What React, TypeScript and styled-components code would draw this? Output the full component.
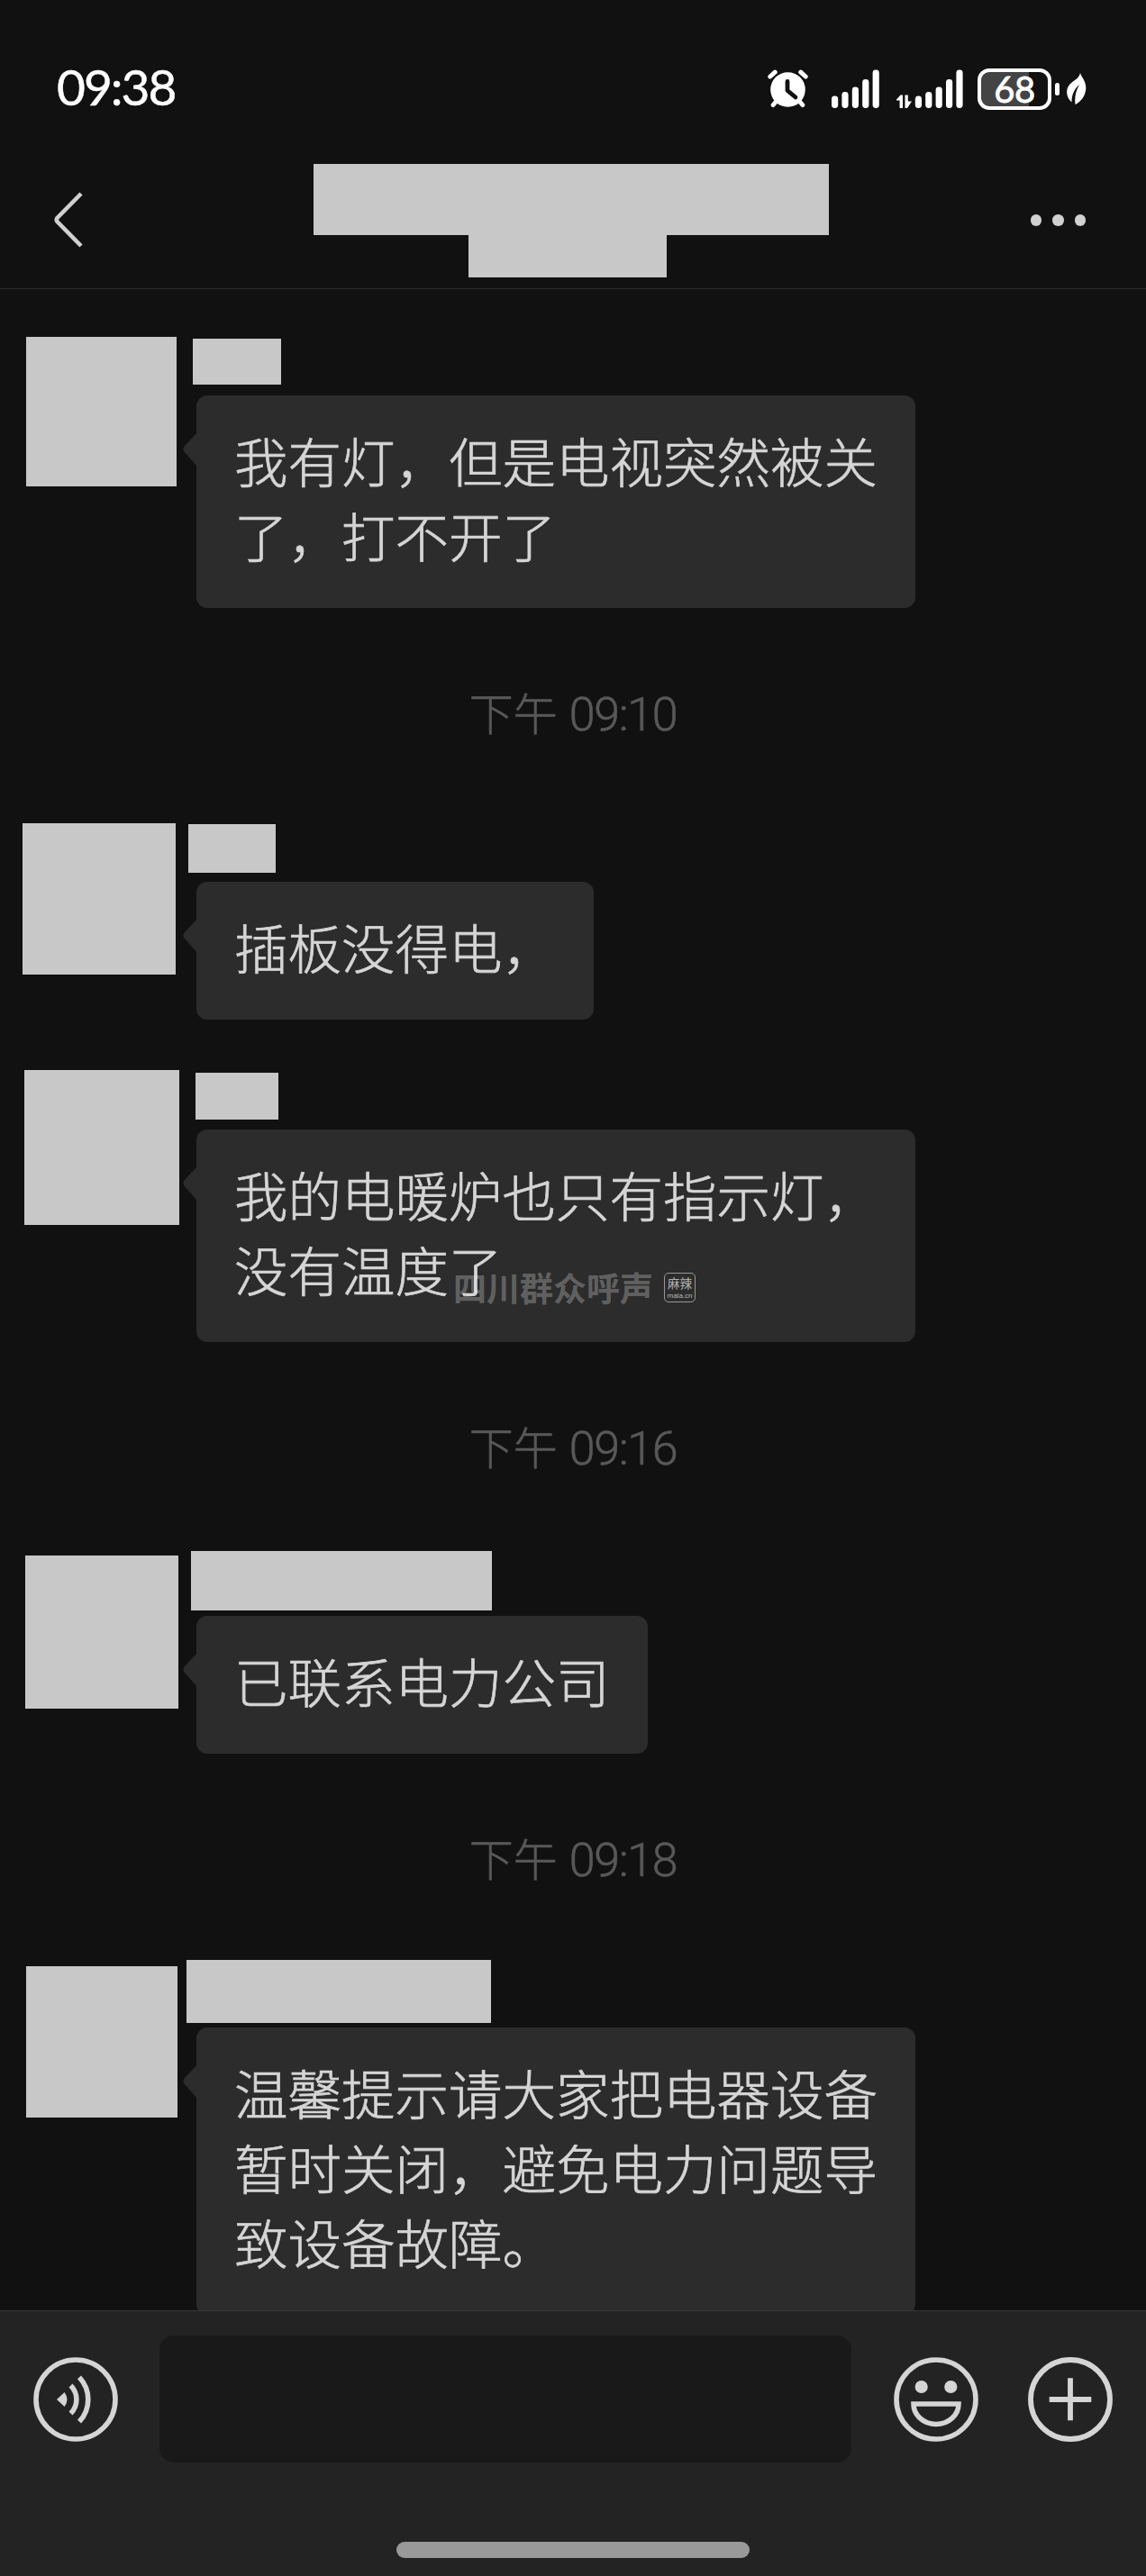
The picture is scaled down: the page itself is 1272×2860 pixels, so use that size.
import React from 'react';
import styled, { createGlobalStyle } from 'styled-components';

const GlobalStyle = createGlobalStyle`
  * {
    box-sizing: border-box;
  }
  body {
    margin: 0;
    background: #111111;
    font-family: "Noto Sans CJK SC", sans-serif;
  }
`;

const Screen = styled.div`
  display: flex;
  flex-direction: column;
  width: 1272px;
  height: 2860px;
  background: #111111;
  overflow: hidden;
`;

const StatusBar = styled.div`
  display: flex;
  align-items: center;
  height: 182px;
  padding: 15px 66px 0 63px;
`;

const Clock = styled.div`
  flex: 1;
  padding-bottom: 6px;
  font-family: Lato, sans-serif;
  font-size: 55px;
  line-height: 60px;
  letter-spacing: -2px;
  color: #ffffff;
  -webkit-text-stroke: 0.5px #ffffff;
`;

const StatusIcons = styled.div`
  display: flex;
  align-items: center;

  svg {
    display: block;
  }
`;

const SignalIcon = styled.svg`
  margin-left: 26px;
`;

const DataSignalIcon = styled.svg`
  margin-left: 19px;
`;

const Battery = styled.div`
  display: flex;
  align-items: center;
  justify-content: center;
  width: 82px;
  height: 46px;
  margin-left: 16px;
  border: 4px solid #ffffff;
  border-radius: 13px;
  background: linear-gradient(to right, #444444 53px, #111111 53px);
  font-family: Lato, sans-serif;
  font-size: 40px;
  line-height: 38px;
  letter-spacing: -0.5px;
  color: #ffffff;
  -webkit-text-stroke: 0.8px #ffffff;
`;

const BatteryCap = styled.div`
  width: 5px;
  height: 14px;
  margin-left: 4px;
  border-radius: 3px;
  background: #ffffff;
`;

const LeafIcon = styled.svg`
  margin-left: 8px;
`;

const TitleBar = styled.div`
  display: flex;
  justify-content: space-between;
  height: 139px;
  padding: 0 67px 0 58px;
  border-bottom: 1px solid #2a2a2a;
`;

const BackButton = styled.div`
  width: 290px;
  padding-top: 30px;
`;

const Title = styled.div`
  display: flex;
  flex-direction: column;
  align-items: flex-start;
  width: 572px;
`;

const TitleLine = styled.div<{ $width: number; $height: number; $indent?: number }>`
  width: ${(p) => p.$width}px;
  height: ${(p) => p.$height}px;
  margin-left: ${(p) => p.$indent || 0}px;
  background: #c8c8c8;
`;

const MoreButton = styled.div`
  display: flex;
  justify-content: flex-end;
  gap: 12px;
  width: 285px;
  padding-top: 56px;
`;

const Dot = styled.span`
  width: 12.5px;
  height: 12.5px;
  border-radius: 50%;
  background: #d0d0d0;
`;

const ChatList = styled.div`
  display: flex;
  flex-direction: column;
  flex: 1;
  gap: 43px;
  min-height: 0;
  padding-top: 39px;
  overflow: hidden;
`;

const TimeStamp = styled.div`
  display: flex;
  align-items: center;
  justify-content: center;
  gap: 13px;
  flex-shrink: 0;
  height: 139px;
  padding-top: 4px;
  font-size: 49px;
  font-weight: 300;
  color: #585858;
  -webkit-text-stroke: 0.6px #585858;
`;

const TimeDigits = styled.span`
  font-family: Roboto, sans-serif;
  font-size: 52px;
  font-weight: 300;
  letter-spacing: -1.4px;
  padding-top: 8px;
`;

const MessageRow = styled.div`
  display: flex;
  flex-shrink: 0;
`;

const AvatarColumn = styled.div`
  width: 218px;
`;

const Avatar = styled.div<{ $left: number; $top: number; $width: number; $height: number }>`
  width: ${(p) => p.$width}px;
  height: ${(p) => p.$height}px;
  margin: ${(p) => p.$top}px 0 0 ${(p) => p.$left}px;
  background: #c8c8c8;
`;

const MessageBody = styled.div`
  display: flex;
  flex-direction: column;
  align-items: flex-start;
`;

const NameSlot = styled.div`
  display: flex;
  align-items: flex-start;
  height: 79px;
`;

const Name = styled.div<{ $left: number; $top: number; $width: number; $height: number }>`
  width: ${(p) => p.$width}px;
  height: ${(p) => p.$height}px;
  margin: ${(p) => p.$top}px 0 0 ${(p) => p.$left}px;
  background: #c8c8c8;
`;

const Bubble = styled.div`
  position: relative;
  padding: 30px 42px 40px;
  border-radius: 12px;
  background: #2c2c2c;
  font-size: 59.5px;
  font-weight: 300;
  line-height: 83px;
  color: #d5d5d5;
  -webkit-text-stroke: 0.7px #d5d5d5;
  white-space: pre;
`;

const BubbleTail = styled.svg`
  position: absolute;
  left: -15px;
  top: 41px;
`;

const Watermark = styled.div`
  position: absolute;
  left: 285px;
  top: 149px;
  display: flex;
  align-items: center;
  gap: 12px;
  font-size: 37px;
  font-weight: 700;
  line-height: 52px;
  color: rgba(255, 255, 255, 0.27);
  -webkit-text-stroke: 0;
`;

const WatermarkLogo = styled.div`
  display: flex;
  flex-direction: column;
  align-items: center;
  width: 35px;
  height: 33px;
  border: 1.5px solid rgba(255, 255, 255, 0.5);
  border-radius: 5px;
  font-size: 13.5px;
  font-weight: 400;
  line-height: 21px;
  color: rgba(255, 255, 255, 0.65);
`;

const LogoUrl = styled.span`
  font-family: "Liberation Sans", sans-serif;
  font-size: 8px;
  line-height: 7px;
`;

const Footer = styled.div`
  display: flex;
  flex-direction: column;
  align-items: center;
  justify-content: space-between;
  height: 295px;
  padding: 27px 0 20px;
  border-top: 1px solid #3a3a3a;
  background: #232323;
`;

const InputRow = styled.div`
  display: flex;
  align-items: center;
  width: 100%;
  padding: 0 37px;
`;

const MessageInput = styled.div`
  flex: 1;
  height: 141px;
  margin: 0 47px 0 46px;
  border-radius: 16px;
  background: #191919;
`;

const ButtonGroup = styled.div`
  display: flex;
  gap: 55px;
`;

const HomeIndicator = styled.div`
  width: 392px;
  height: 18px;
  border-radius: 9px;
  background: #999999;
`;

type Box = { left: number; top: number; width: number; height: number };

type ChatItem =
  | { type: 'time'; time: string }
  | { type: 'message'; text: string; avatar: Box; name: Box; watermark?: boolean };

const chat: ChatItem[] = [
  {
    type: 'message',
    text: '我有灯，但是电视突然被关\n了，打不开了',
    avatar: { left: 29, top: 14, width: 167, height: 166 },
    name: { left: -4, top: 16, width: 98, height: 51 },
  },
  { type: 'time', time: '09:10' },
  {
    type: 'message',
    text: '插板没得电，',
    avatar: { left: 25, top: 14, width: 170, height: 168 },
    name: { left: -9, top: 15, width: 97, height: 54 },
  },
  {
    type: 'message',
    text: '我的电暖炉也只有指示灯，\n没有温度了',
    avatar: { left: 27, top: 13, width: 172, height: 172 },
    name: { left: -1, top: 16, width: 92, height: 52 },
    watermark: true,
  },
  { type: 'time', time: '09:16' },
  {
    type: 'message',
    text: '已联系电力公司',
    avatar: { left: 28, top: 12, width: 170, height: 170 },
    name: { left: -6, top: 7, width: 334, height: 66 },
  },
  { type: 'time', time: '09:18' },
  {
    type: 'message',
    text: '温馨提示请大家把电器设备\n暂时关闭，避免电力问题导\n致设备故障。',
    avatar: { left: 29, top: 11, width: 168, height: 168 },
    name: { left: -11, top: 4, width: 338, height: 70 },
  },
];

const signalBars = [13.5, 18, 23.5, 32, 42.5];

const SignalBars: React.FC<{ offset?: number }> = ({ offset = 0 }) => (
  <>
    {signalBars.map((h, i) => (
      <rect key={h} x={offset + i * 11.4} y={43 - h} width="7.2" height={h} rx="3.4" fill="#fff" />
    ))}
  </>
);

const AlarmIcon: React.FC = () => (
  <svg width="45" height="43" viewBox="0 0 45 43">
    <g stroke="#fff" strokeWidth="5" strokeLinecap="round">
      <path d="M2.8 8 L8.2 3.2" />
      <path d="M42.2 8 L36.8 3.2" />
      <path d="M10 35 L6.2 39.5" />
      <path d="M35 35 L38.8 39.5" />
    </g>
    <circle cx="22.5" cy="22.5" r="19.3" fill="#fff" />
    <path
      d="M22 13.5 V23.5 L31 31"
      fill="none"
      stroke="#111"
      strokeWidth="4.8"
      strokeLinecap="round"
      strokeLinejoin="round"
    />
  </svg>
);

const VoiceIcon: React.FC = () => (
  <svg width="94" height="94" viewBox="0 0 94 94" fill="none" stroke="#d5d5d5" strokeWidth="5.6">
    <circle cx="47" cy="47" r="44" />
    <path d="M26 47 L34.6 39 Q40.4 47 34.6 55 Z" fill="#d5d5d5" stroke="none" />
    <path d="M41.5 31.5 A22 22 0 0 1 41.5 62.5" />
    <path d="M51 22.3 A36 36 0 0 1 51 71.7" />
  </svg>
);

const SmileIcon: React.FC = () => (
  <svg width="94" height="94" viewBox="0 0 94 94" fill="none" stroke="#d5d5d5" strokeWidth="5.6">
    <circle cx="47" cy="47" r="44" />
    <circle cx="30.7" cy="33" r="7.1" fill="#d5d5d5" stroke="none" />
    <circle cx="63.3" cy="33" r="7.1" fill="#d5d5d5" stroke="none" />
    <path d="M22 52 H72 A25 22.5 0 0 1 22 52 Z" />
  </svg>
);

const PlusIcon: React.FC = () => (
  <svg width="94" height="94" viewBox="0 0 94 94" fill="none" stroke="#d5d5d5" strokeWidth="5.8">
    <circle cx="47" cy="47" r="44" />
    <path d="M23.7 47 H70.3 M47 23.3 V70.3" />
  </svg>
);

const Message: React.FC<{ item: Extract<ChatItem, { type: 'message' }> }> = ({ item }) => {
  const { avatar, name } = item;
  return (
    <MessageRow>
      <AvatarColumn>
        <Avatar $left={avatar.left} $top={avatar.top} $width={avatar.width} $height={avatar.height} />
      </AvatarColumn>
      <MessageBody>
        <NameSlot>
          <Name $left={name.left} $top={name.top} $width={name.width} $height={name.height} />
        </NameSlot>
        <Bubble>
          <BubbleTail width="16" height="38" viewBox="0 0 16 38">
            <path d="M16 0 L1.5 15.5 Q-0.5 18.5 1.5 21.5 L16 38 Z" fill="#2c2c2c" />
          </BubbleTail>
          {item.text}
          {item.watermark && (
            <Watermark>
              四川群众呼声
              <WatermarkLogo>
                麻辣
                <LogoUrl>mala.cn</LogoUrl>
              </WatermarkLogo>
            </Watermark>
          )}
        </Bubble>
      </MessageBody>
    </MessageRow>
  );
};

const App: React.FC = () => {
  return (
    <Screen>
      <GlobalStyle />
      <StatusBar>
        <Clock>09:38</Clock>
        <StatusIcons>
          <AlarmIcon />
          <SignalIcon width="53" height="43" viewBox="0 0 53 43">
            <SignalBars />
          </SignalIcon>
          <DataSignalIcon width="74" height="43" viewBox="0 0 74 43">
            <path d="M0 33.5 L4.5 28.5 H7 V43 H3.6 V34.5 H0 Z" fill="#fff" />
            <path d="M9.5 28.5 H12.8 V35.5 H17 L12 43 H9.5 Z" fill="#fff" />
            <SignalBars offset={20.8} />
          </DataSignalIcon>
          <Battery>68</Battery>
          <BatteryCap />
          <LeafIcon width="22" height="35" viewBox="0 0 22 35">
            <path
              d="M15 0 C16 4 21.5 9 21.3 17 C21 25 16 32 9.5 35 C8.5 27 10 20 14 13 C8 18 5.5 25 5.5 32.5 C-1 27 -1.5 18 3.5 12.5 C8 8 13.5 6.5 15 0 Z"
              fill="#fff"
            />
          </LeafIcon>
        </StatusIcons>
      </StatusBar>

      <TitleBar>
        <BackButton>
          <svg width="36" height="64" viewBox="0 0 36 64">
            <path d="M32 3 L5.5 30 Q4 32 5.5 34 L32 61" fill="none" stroke="#d0d0d0" strokeWidth="4.6" />
          </svg>
        </BackButton>
        <Title>
          <TitleLine $width={572} $height={79} />
          <TitleLine $width={220} $height={47} $indent={172} />
        </Title>
        <MoreButton>
          <Dot />
          <Dot />
          <Dot />
        </MoreButton>
      </TitleBar>

      <ChatList>
        {chat.map((item, index) =>
          item.type === 'time' ? (
            <TimeStamp key={index}>
              下午
              <TimeDigits>{item.time}</TimeDigits>
            </TimeStamp>
          ) : (
            <Message key={index} item={item} />
          )
        )}
      </ChatList>

      <Footer>
        <InputRow>
          <VoiceIcon />
          <MessageInput />
          <ButtonGroup>
            <SmileIcon />
            <PlusIcon />
          </ButtonGroup>
        </InputRow>
        <HomeIndicator />
      </Footer>
    </Screen>
  );
};

export default App;
